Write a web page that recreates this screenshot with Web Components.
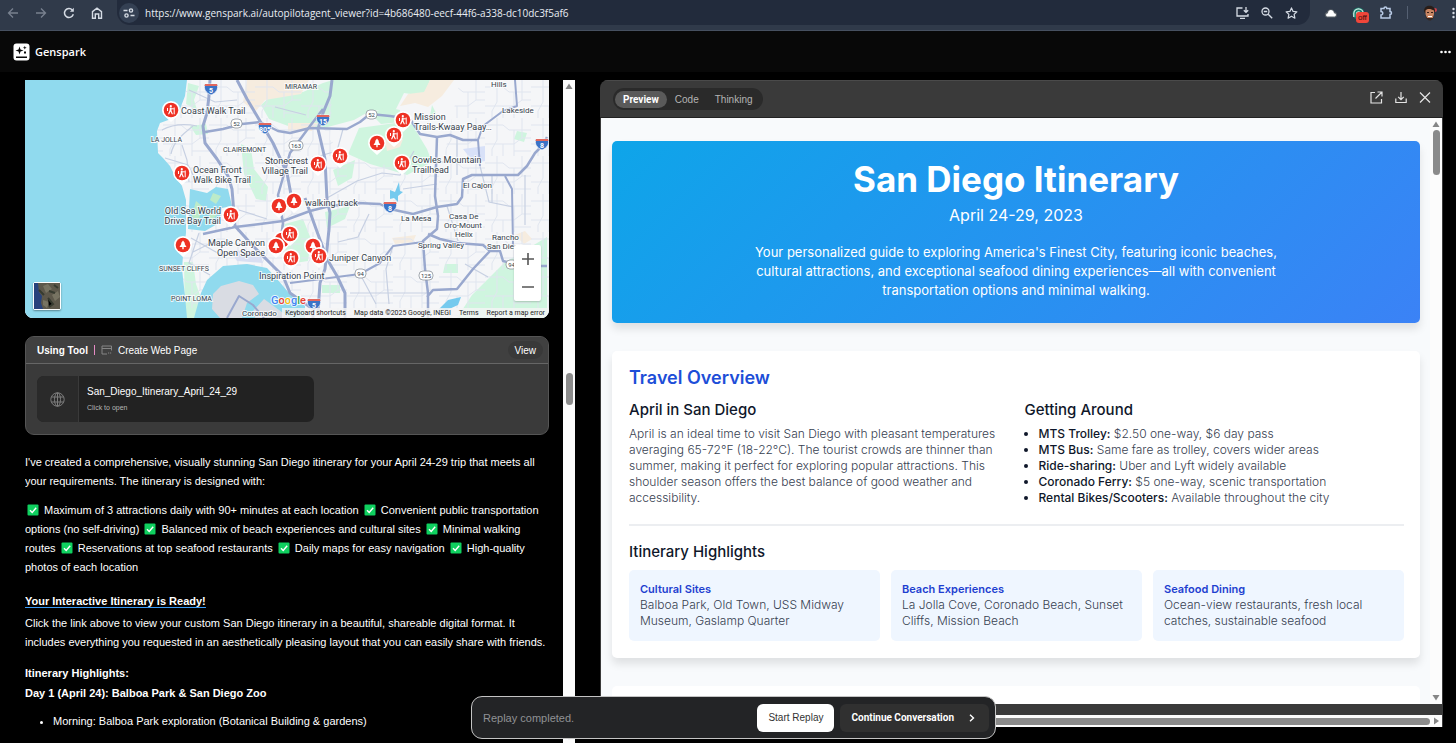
<!DOCTYPE html>
<html lang="en">
<head>
<meta charset="utf-8">
<meta name="viewport" content="width=device-width, initial-scale=1">
<title>Genspark</title>
<style>
    body {
        margin: 0;
        background: #000;
        color: #fff;
        font-family: "Liberation Sans", Arial, sans-serif;
        font-size: 11px;
    }
</style>
</head>
<body>
<app-shell>
    <browser-bar slot="top"></browser-bar>
    <site-header slot="top"></site-header>

    <chat-column slot="chat">
        <trail-map></trail-map>
        <tool-card tool="Create Web Page" file="San_Diego_Itinerary_April_24_29"></tool-card>
        <chat-reply></chat-reply>
    </chat-column>

    <preview-panel slot="preview">
        <hero-banner>
            <span slot="title">San Diego Itinerary</span>
            <span slot="dates">April 24-29, 2023</span>
            Your personalized guide to exploring America's Finest City, featuring iconic beaches, cultural attractions, and exceptional seafood dining experiences—all with convenient transportation options and minimal walking.
        </hero-banner>
        <travel-overview>
            <highlight-tile heading="Cultural Sites">Balboa Park, Old Town, USS Midway Museum, Gaslamp Quarter</highlight-tile>
            <highlight-tile heading="Beach Experiences">La Jolla Cove, Coronado Beach, Sunset Cliffs, Mission Beach</highlight-tile>
            <highlight-tile heading="Seafood Dining">Ocean-view restaurants, fresh local catches, sustainable seafood</highlight-tile>
        </travel-overview>
        <blank-card></blank-card>
    </preview-panel>

    <replay-bar slot="float"></replay-bar>
</app-shell>

<script>
const reset = `
    :host {
        box-sizing: border-box;
    }
    * {
        margin: 0;
        padding: 0;
        box-sizing: border-box;
    }
    button, input {
        font: inherit;
        color: inherit;
        background: none;
        border: 0;
    }
    button {
        display: inline-flex;
        align-items: center;
        justify-content: center;
        cursor: pointer;
    }
    svg {
        display: block;
        flex: none;
    }
`;

class BaseElement extends HTMLElement {

    constructor() {
        super();
        this.shadowDOM = this.attachShadow({mode: "open"});
    }

    connectedCallback() {
        this.shadowDOM.innerHTML = `<style>${reset}</style>${this.template()}`;
    }
}

class AppShell extends BaseElement {
    template() {
        return `
            <style>
                :host {
                    display: flex;
                    flex-direction: column;
                    height: 100vh;
                    overflow: hidden;
                }
                main {
                    flex: 1;
                    min-height: 0;
                    display: grid;
                    grid-template-columns: minmax(0, 550fr) minmax(0, 843fr);
                    grid-template-rows: minmax(0, 1fr);
                    gap: 25px;
                    padding: 8px 13px 0 25px;
                }
            </style>
            <slot name="top"></slot>
            <main>
                <slot name="chat"></slot>
                <slot name="preview"></slot>
            </main>
            <slot name="float"></slot>
        `;
    }
}

class BrowserBar extends BaseElement {
    template() {
        return `
            <style>
                :host {
                    display: flex;
                    align-items: center;
                    flex: none;
                    height: 31px;
                    padding: 0 0 5px 5px;
                    background: #303a4a;
                    border-bottom: 1px solid #465060;
                    color: #d5dbe4;
                }
                nav {
                    display: flex;
                    gap: 12px;
                    margin-right: 12px;
                }
                nav button {
                    width: 16px;
                    height: 16px;
                }
                .off {
                    color: #78818f;
                }
                .address {
                    flex: 1;
                    display: flex;
                    align-items: center;
                    gap: 12px;
                    height: 25px;
                    padding: 0 12px 0 2px;
                    border-radius: 0 0 13px 13px;
                    background: #222b3c;
                }
                .site {
                    width: 20px;
                    height: 20px;
                    border-radius: 50%;
                    background: #344053;
                }
                .address input {
                    flex: 1;
                    min-width: 0;
                    margin-left: -6px;
                    font-family: "Open Sans", sans-serif;
                    font-size: 10px;
                    color: #e9edf3;
                    outline: 0;
                }
                .extensions {
                    display: flex;
                    align-items: center;
                    gap: 14px;
                    padding: 0 1px 0 14px;
                }
                .blocker {
                    position: relative;
                }
                .blocker span {
                    position: absolute;
                    top: 5px;
                    left: 4px;
                    padding: 0 2px;
                    border-radius: 3px;
                    background: #f0463a;
                    color: #3a0d0a;
                    font-size: 8px;
                    line-height: 11px;
                }
                i {
                    width: 1px;
                    height: 13px;
                    background: #556072;
                }
            </style>
            <nav>
                <button class="off" aria-label="Back"><svg width="12" height="12" viewBox="0 0 12 12" fill="none" stroke="currentColor" stroke-width="1.3"><path d="M11 6H2M6 1.5 1.5 6 6 10.500"/></svg></button>
                <button class="off" aria-label="Forward"><svg width="12" height="12" viewBox="0 0 12 12" fill="none" stroke="currentColor" stroke-width="1.3"><path d="M1 6h9M6 1.500 10.500 6 6 10.500"/></svg></button>
                <button aria-label="Reload"><svg width="12" height="12" viewBox="0 0 12 12" fill="none" stroke="currentColor" stroke-width="1.500"><path d="M10.300 7.300A4.500 4.500 0 1 1 9.300 2.900"/><path d="M10.800.8v3.900H6.900z" fill="currentColor" stroke="none"/></svg></button>
                <button aria-label="Home"><svg width="12" height="12" viewBox="0 0 12 12" fill="none" stroke="currentColor" stroke-width="1.400"><path d="M1.500 4.600 6 1.100l4.500 3.500v6.600H7.700V7H4.300v4.200H1.500z"/></svg></button>
            </nav>
            <div class="address">
                <button class="site" aria-label="Site information"><svg width="12" height="10" viewBox="0 0 12 10" fill="none" stroke="currentColor" stroke-width="1.400"><path d="M.5 2.500h4M7.500 7.500h4"/><circle cx="8" cy="2.500" r="1.600"/><circle cx="3.500" cy="7.500" r="1.600"/></svg></button>
                <input aria-label="Address" value="https://www.genspark.ai/autopilotagent_viewer?id=4b686480-eecf-44f6-a338-dc10dc3f5af6">
                <button aria-label="Install app"><svg width="13" height="12" viewBox="0 0 13 12" fill="none" stroke="currentColor" stroke-width="1.300"><path d="M6.500 1H1v8h11V7M4 11.300h5M10 0v5M7.800 3.200 10 5.300l2.200-2.100"/></svg></button>
                <button aria-label="Zoom"><svg width="12" height="12" viewBox="0 0 12 12" fill="none" stroke="currentColor" stroke-width="1.300"><circle cx="4.500" cy="4.500" r="3.500"/><path d="m7.200 7.200 4 4M2.800 4.500h3.400"/></svg></button>
                <button aria-label="Bookmark this page"><svg width="13" height="12" viewBox="0 0 13 12" fill="none" stroke="currentColor" stroke-width="1.200" stroke-linejoin="round"><path d="m6.500.9 1.600 3.500 3.800.4-2.800 2.600.8 3.800-3.400-2-3.400 2 .8-3.800L1.100 4.800l3.800-.4z"/></svg></button>
            </div>
            <div class="extensions">
                <button aria-label="Cloud storage"><svg width="14" height="10" viewBox="0 0 14 10"><path d="M3 9.500a2.800 2.800 0 0 1 0-5.500 4 4 0 0 1 7.600 0 2.800 2.800 0 0 1 .4 5.500z" fill="#5b6268"/><path d="M4 8.500c-3 0-2-3.500 0-3.300 0-4.300 5.600-4.300 6 0 2.500-.2 2.800 3.300 0 3.300z" fill="#fff"/></svg></button>
                <button class="blocker" aria-label="Blocker"><svg width="13" height="12" viewBox="0 0 13 12" fill="none"><circle cx="6.500" cy="6.500" r="6" fill="#177f6c"/><path d="M1.800 10V6.500a4.700 4.700 0 0 1 9.400 0M4.500 10V6.800a2 2 0 0 1 4 0" stroke="#d9f0ea" stroke-width="1.200"/></svg><span>off</span></button>
                <button aria-label="Extensions"><svg width="14" height="13" viewBox="0 0 14 13" fill="none" stroke="#b9cbe6" stroke-width="1.500"><path d="M2 2.500h3a1.400 1.400 0 0 1 2.800 0H11v3a1.500 1.500 0 0 1 0 3V12H2V9a1.600 1.600 0 0 0 0-3.500z"/></svg></button>
                <i></i>
                <button aria-label="Profile"><svg width="16" height="16" viewBox="0 0 16 16"><circle cx="13" cy="5" r="2" fill="#c9414b"/><path d="M2 6c0-7 11-7 11 0l-1 2H3z" fill="#281d19"/><path d="M3.500 5.500C6 3 9 4 12 5.500 12.500 12 10 15 7.800 15 5.500 15 3.200 12 3.500 5.500z" fill="#c88562"/><path d="M5 7.500h2M9 7.500h2" stroke="#382019"/><path d="M6 11.500h4" stroke="#fff"/><path d="M3.500 10c0 3 2 5.500 4.300 5.500S12 13 12 10l-1 3H5z" fill="#342722"/></svg></button>
                <button aria-label="Browser menu"><svg width="3" height="12" viewBox="0 0 3 12" fill="currentColor"><circle cx="1.500" cy="2" r="1.200"/><circle cx="1.500" cy="6" r="1.200"/><circle cx="1.500" cy="10" r="1.200"/></svg></button>
            </div>
        `;
    }
}

class SiteHeader extends BaseElement {
    template() {
        return `
            <style>
                :host {
                    display: flex;
                    align-items: center;
                    justify-content: space-between;
                    flex: none;
                    height: 41px;
                    padding: 0 5px 0 13px;
                    background: #080808;
                }
                a {
                    display: flex;
                    align-items: center;
                    gap: 5px;
                    color: #fff;
                    font: 600 11px/17px "Open Sans", sans-serif;
                    text-decoration: none;
                }
            </style>
            <a href="#"><svg width="17" height="18" viewBox="0 0 17 18"><rect width="16" height="17" x=".5" y=".5" rx="3" fill="#fff"/><path d="M6.500 3.500 7.500 6.500l3 1-3 1-1 3-1-3-3-1 3-1zM11.800 2.800l.5 1.400 1.400.5-1.400.5-.5 1.400-.5-1.400-1.400-.5 1.400-.5zM11 8.500h2v2h-2zM3 13.500h11V15H3z" fill="#0a0a0a"/></svg>Genspark</a>
            <button aria-label="More"><svg width="11" height="4" viewBox="0 0 11 4" fill="#fff"><circle cx="1.500" cy="2" r="1.300"/><circle cx="5.500" cy="2" r="1.300"/><circle cx="9.500" cy="2" r="1.300"/></svg></button>
        `;
    }
}

/* Track with a thumb; "start" and "length" are shares of the track */
class ScrollRail extends BaseElement {
    template() {
        const flat = this.hasAttribute("flat");
        const start = this.getAttribute("start");
        const length = this.getAttribute("length");
        return `
            <style>
                :host {
                    display: flex;
                    flex-direction: ${flat ? "row" : "column"};
                    align-items: center;
                    flex: none;
                    ${flat ? "height" : "width"}: 12px;
                    background: #fcfcfc;
                }
                .track {
                    flex: 1;
                    align-self: stretch;
                    display: flex;
                    flex-direction: ${flat ? "row" : "column"};
                    align-items: center;
                }
                .before {
                    flex: 0 0 ${start}%;
                }
                .thumb {
                    flex: 0 0 ${length}%;
                    ${flat ? "height" : "width"}: 7px;
                    border-radius: 4px;
                    background: #8b8b8b;
                }
                svg {
                    margin: 2px;
                }
            </style>
            ${flat ? "" : `<svg width="8" height="8" viewBox="0 0 8 8"><path d="M4 1.500 7.500 7h-7z" fill="#868686"/></svg>`}
            <div class="track"><div class="before"></div><div class="thumb"></div></div>
            ${flat ? `<svg width="8" height="8" viewBox="0 0 8 8"><path d="M7 4 2 7.500v-7z" fill="#868686"/></svg>`
                   : `<svg width="8" height="8" viewBox="0 0 8 8"><path d="M4 6.500.5 1h7z" fill="#868686"/></svg>`}
        `;
    }
}

class ChatColumn extends BaseElement {
    template() {
        return `
            <style>
                :host {
                    display: flex;
                    gap: 14px;
                    min-width: 0;
                    min-height: 0;
                }
                .content {
                    flex: 1;
                    min-width: 0;
                    display: flex;
                    flex-direction: column;
                    gap: 18px;
                    overflow: hidden;
                }
                scroll-rail {
                    height: 100%;
                }
            </style>
            <div class="content"><slot></slot></div>
            <scroll-rail start="44" length="5"></scroll-rail>
        `;
    }
}

const hikePins = [[146, 30], [157, 93], [206, 135], [378, 40], [369, 55], [377, 83], [293, 84], [315, 76], [265, 154], [266, 178]];
const treePins = [[352, 63], [254, 126], [269, 121], [158, 165], [251, 166], [288, 166]];

class TrailMap extends BaseElement {

    pins(id, list) {
        return list.map(([x, y]) => `<use href="#${id}" x="${x}" y="${y}"/>`).join("");
    }

    template() {
        return `
            <style>
                :host {
                    display: block;
                    position: relative;
                    flex: none;
                    height: 238px;
                    border-radius: 0 0 8px 8px;
                    background: #90daee;
                    overflow: hidden;
                    font-family: Roboto, sans-serif;
                }
                .canvas {
                    width: 100%;
                    height: 100%;
                }
                text {
                    fill: #37424c;
                    stroke: #fff;
                    stroke-width: 2px;
                    stroke-opacity: .8;
                    paint-order: stroke;
                    font-size: 9px;
                }
                .area text {
                    font-size: 7px;
                }
                .city text {
                    font-size: 8px;
                }
                .route text {
                    font-size: 6px;
                    text-anchor: middle;
                    stroke: none;
                }
                .shield text {
                    fill: #fff;
                    font-size: 7px;
                    font-weight: 700;
                    text-anchor: middle;
                    stroke: none;
                }
                .logo {
                    font-size: 11px;
                    font-weight: 500;
                }
                .layers {
                    position: absolute;
                    left: 8px;
                    bottom: 8px;
                    border: 1px solid #fff;
                    border-radius: 2px;
                    box-shadow: 0 1px 2px rgba(0, 0, 0, .4);
                }
                .zoom {
                    position: absolute;
                    right: 8px;
                    bottom: 17px;
                    display: flex;
                    flex-direction: column;
                    background: #fff;
                    box-shadow: 0 1px 2px rgba(0, 0, 0, .2);
                    border-radius: 2px;
                }
                .zoom button {
                    width: 27px;
                    height: 28px;
                }
                footer {
                    position: absolute;
                    right: 0;
                    bottom: 0;
                    display: flex;
                    gap: 8px;
                    padding: 0 4px 0 3px;
                    background: rgba(245, 245, 245, .8);
                    color: #222;
                    font-size: 7px;
                    line-height: 10px;
                }
                footer a {
                    color: inherit;
                    text-decoration: none;
                }
            </style>
            <svg class="canvas" viewBox="0 0 524 238" preserveAspectRatio="xMidYMid slice" role="img" aria-label="Map of San Diego walking trails">
                <defs>
                    <pattern id="streets" width="46" height="38" patternUnits="userSpaceOnUse">
                        <path d="M0 7h18l6 5h22M12 0v22l-5 9v7M29 12v26M0 26h29l8-6h9M37 0v20M18 26v12M29 33h17" fill="none" stroke="#e0e5ef"/>
                    </pattern>
                    <g id="base">
                        <path d="M0 12 5.500 7A9 9 0 1 0-5.500 7z" fill="#fff"/>
                        <circle r="7.300" fill="#ee3124"/>
                    </g>
                    <g id="hike">
                        <use href="#base"/>
                        <circle cx="-.2" cy="-3.800" r="1.100" fill="#fff"/>
                        <path d="M-1.200-2.500.9-2.200.5.800 2 4.200H.8L-.5 1.500-1.800 4.200H-3l1.600-4z" fill="#fff"/>
                        <path d="M-3.500-2v3M.8-1.200h2M3.200-2.500V4.300" fill="none" stroke="#fff"/>
                    </g>
                    <g id="tree">
                        <use href="#base"/>
                        <path d="M0-4.500 2.200-1.500H1.400L3.500 2H.7v2.300H-.7V2h-2.800l2.100-3.500h-.8z" fill="#fff"/>
                    </g>
                    <g id="interstate">
                        <path d="M-6-5H6c2 5-1 9-6 11C-5 4-8 0-6-5z" fill="#3b73c6" stroke="#fff" stroke-width=".7"/>
                        <path d="M-6-5H6l.5 2h-13z" fill="#e2685f"/>
                    </g>
                </defs>
                <rect width="524" height="238" fill="#f5f6f8"/>
                <g fill="#cff5df">
                    <path d="M308 0h97l-6 16-20-3-8 16-26 2-16 9-30 8-33-1-22-8-8-14 12-11 30-2 20-9z"/>
                    <path d="M334 48 385 41l17 28 5 13-25 13-37-11-22-10z"/>
                    <path d="m308 90 22-10-3 18-14 8zM216 64l10 5 3 20 14 18-2 14-10-2-12-25zM163 3l11 3-5 14 3 10-11-6zM165 46l16-2 2 10-12 1z"/>
                    <path d="m432 238 15-23 18-18 14-14 43-26v81zM256 145l22-6 8 20-3 22-20 3zM420 184h13v9h-15zM346 34l15-7 14 3 1 12-20 2zM297 205h18v8h-18z"/>
                    <path d="M159 182h9l3 22 5 14v20h-16zM300 132l25-6-5 13-18 9zM407 25l4 8-6 3zM492 51l10 2-3 9-10-3z"/>
                </g>
                <g fill="#f6ecdf">
                    <path d="M222 0h62l-8 14-36 6-10 12-12-10zM405 0h24l-12 16-14 11-13-4-15 3 8-12 16-2zM263 43h30l-6 8h-24zM360 60l18-1-3 8-13 4zM367 158l24-3-3 7-18 2zM490 155l10-4 7 8-8 5z"/>
                </g>
                <path d="M126 0h182l-3 60 30 20 80 16 20-96h89v238H126z" fill="url(#streets)"/>
                <path d="M0 0h162l-2 16-5 13-9 10-11 4-3 8 1 22 5 5 7 8 5 10 7 10 4 14v33l-3 23-1 13 3 27 2 22H0z" fill="#90daee"/>
                <path d="m165 109 17 4 9-6 12 2 4 17-10 2-3 15-14 8-17-2z" fill="#90daee"/>
                <path d="m171 121 6 5-4 18-6-8zM188 113l8 3-5 8-6-4zM184 132l8 3-7 7z" fill="#bcebc9"/>
                <path d="m169 238 7-25 6-13 16-14 24-2 20 4 10 11 12 14 16 13v12z" fill="#90daee"/>
                <path d="m188 214 8-8 18-5 14 4 6 9-12 9-5 15h-22l-8-9zM228 231l11-12 26 19h-35z" fill="#d9dce3"/>
                <path d="m205 170 30 2 3 11-26-2z" fill="#d9dff2"/>
                <path d="m438 69 22-3v15l-11 2z" fill="#d8e1f8"/>
                <path d="m365 110 5 2 4-10 1 9 3 1-5 4v6l-4-4-4 1zM414 229l9-9 13-3-3 8-11 5z" fill="#75caee"/>
                <g fill="none" stroke="#c7d0e2" stroke-width="1.200">
                    <path d="M137 50c9-5 21-7 35-4M146 74c2-12 12-20 22-28M157 65l5 15 2 22M140 78l23 7 9 18M164 10l26 12 22-2M167 29l30 5M214 130l28 9M166 158l32 18M174 153l-10 30 21 12M168 172l22-11M250 27l31 8M318 49l-6 22-21 6"/>
                    <path d="m302 118 30-17 25-8 18 2 14-24M344 134l-11 23-20 5M368 166l-7 23 3 35M432 58v37M467 95v28M500 95v50M410 82h42M455 86l9 36 24 5M412 104l-34 5M335 194l16 30M440 184l23 13M422 126l11 35M325 213h78"/>
                </g>
                <g fill="none" stroke="#99a8ce" stroke-width="2.500" stroke-linejoin="round">
                    <path d="m185 0-1 16-2 17-4 13 2 17 12 16 11 17 4 13 3 37 18 20 17 17 13 13 7 17 23 16v10" stroke-width="3"/>
                    <path d="m212 0 10 19 13 22 13 22 14 30 5 27M280 118l10 28 12 33 10 17 8 17v25" stroke-width="3"/>
                    <path d="m180 52 18-3 19-5 18-2 18 9 12 2 20-5 37 1 13-7 10-8 20 2 20 3 10 15 17 3 13-2 13 5h15"/>
                    <path d="m307 0-2 16-7 17-5 16 7 30 2 41 3 13-1 16-2 20-2 20-5 14-2 28" stroke-width="3"/>
                    <path d="m298 29-13 17-20 27-12 42 5 28-4 30M178 154l32-7 25-3 23-3 27-10 20-5 27-3 23 1 10 5 23 5 24-7 20-3 5-7 1-18 9-4h46l9-9 8-13 7-7 5-9"/>
                    <path d="m412 57-2 59 3 20-1 13-14 12 2 28 3 24v25M403 154l12 5 17 4 26 2 7 6h10l3 10 20 5h24M465 171l-17 18-16 20-24 1-6 7"/>
                    <path d="m398 162-30 4-13 17-20 11-23 3-47 6M455 86l-2-26 5-14 20-15 14-5-2-26M480 96l7 13 1 57M202 238l12-22 14 9 11 13" stroke-width="2"/>
                </g>
                <g class="shield">
                    <use href="#interstate" x="186" y="9"/><text x="186" y="13">5</text>
                    <use href="#interstate" x="240" y="48"/><text x="240" y="52">805</text>
                    <use href="#interstate" x="298" y="40"/><text x="298" y="44">15</text>
                    <use href="#interstate" x="365" y="127"/><text x="365" y="131">8</text>
                    <use href="#interstate" x="517" y="64"/><text x="517" y="68">8</text>
                    <use href="#interstate" x="289" y="224"/><text x="289" y="228">5</text>
                </g>
                <g class="route">
                    <g fill="#fff" stroke="#8d949c" stroke-width=".8">
                        <rect x="206" y="39" width="11" height="9" rx="4"/>
                        <rect x="341" y="30" width="11" height="9" rx="4"/>
                        <rect x="264" y="61" width="14" height="9" rx="4"/>
                        <rect x="330" y="189" width="11" height="9" rx="4"/>
                        <rect x="394" y="191" width="14" height="9" rx="4"/>
                        <rect x="481" y="180" width="11" height="9" rx="4"/>
                    </g>
                    <text x="211.500" y="46">52</text><text x="346.500" y="37">52</text><text x="271" y="68">163</text>
                    <text x="335.500" y="196">94</text><text x="401" y="198">125</text><text x="486.500" y="187">94</text>
                </g>
                <g class="area">
                    <text x="260" y="9">MIRAMAR</text>
                    <text x="126" y="62">LA JOLLA</text>
                    <text x="198" y="72">CLAIREMONT</text>
                    <text x="134" y="191">SUNSET CLIFFS</text>
                    <text x="146" y="221">POINT LOMA</text>
                </g>
                <g class="city">
                    <text x="466" y="7">Hills</text>
                    <text x="477" y="33">Lakeside</text>
                    <text x="438" y="108">El Cajon</text>
                    <text x="376" y="141">La Mesa</text>
                    <text x="424" y="139">Casa De</text>
                    <text x="419" y="148">Oro-Mount</text>
                    <text x="430" y="157">Helix</text>
                    <text x="393" y="168">Spring Valley</text>
                    <text x="467" y="160">Rancho</text>
                    <text x="462" y="169">San Diego</text>
                    <text x="217" y="236">Coronado</text>
                </g>
                <use href="#base" x="257" y="160"/>
                ${this.pins("hike", hikePins)}
                ${this.pins("tree", treePins)}
                <use href="#hike" x="294" y="176"/>
                <text x="156" y="34">Coast Walk Trail</text>
                <text x="168" y="93">Ocean Front</text>
                <text x="168" y="103">Walk Bike Trail</text>
                <text x="389" y="40">Mission</text>
                <text x="389" y="50">Trails-Kwaay Paay…</text>
                <text x="387" y="83">Cowles Mountain</text>
                <text x="387" y="93">Trailhead</text>
                <g text-anchor="end">
                    <text x="283" y="84">Stonecrest</text>
                    <text x="283" y="94">Village Trail</text>
                    <text x="196" y="134">Old Sea World</text>
                    <text x="196" y="144">Drive Bay Trail</text>
                    <text x="240" y="166">Maple Canyon</text>
                    <text x="240" y="176">Open Space</text>
                </g>
                <text x="280" y="126">walking track</text>
                <text x="304" y="181">Juniper Canyon</text>
                <text x="234" y="199">Inspiration Point</text>
                <text class="logo" x="246" y="224"><tspan fill="#4285f4">G</tspan><tspan fill="#ea4335">o</tspan><tspan fill="#fbbc05">o</tspan><tspan fill="#4285f4">g</tspan><tspan fill="#34a853">l</tspan><tspan fill="#ea4335">e</tspan></text>
            </svg>
            <button class="layers" aria-label="Satellite view"><svg width="26" height="26" viewBox="0 0 26 26"><path d="M0 0h26v26H0z" fill="#5d584b"/><path d="M0 0h4l1 9 3 4-1 7 2 6H0z" fill="#27427c"/><path d="m9 3 5-2 4 5-6 4zM18 12l6-4 2 6-5 4zM9 17l6 2-2 6-4-3z" fill="#777362"/><path d="m5 7 5 5M15 8l6 2M14 15l5 6-4 3M20 2l4 3" stroke="#373b30" stroke-width="2"/></svg></button>
            <div class="zoom">
                <button aria-label="Zoom in"><svg width="12" height="12" viewBox="0 0 12 12"><path d="M6 0v12M0 6h12" stroke="#555" stroke-width="1.600"/></svg></button>
                <button aria-label="Zoom out"><svg width="12" height="12" viewBox="0 0 12 12"><path d="M0 6h12" stroke="#555" stroke-width="1.600"/></svg></button>
            </div>
            <footer>
                <button>Keyboard shortcuts</button>
                <span>Map data ©2025 Google, INEGI</span>
                <a href="#">Terms</a>
                <a href="#">Report a map error</a>
            </footer>
        `;
    }
}

class ToolCard extends BaseElement {
    template() {
        return `
            <style>
                :host {
                    display: block;
                    flex: none;
                    border: 1px solid #555;
                    border-radius: 9px;
                    background: #3a3a3a;
                    overflow: hidden;
                }
                header {
                    display: flex;
                    align-items: center;
                    gap: 6px;
                    height: 27px;
                    padding: 0 5px 0 11px;
                    border-bottom: 1px solid #666;
                    background: #404040;
                    font-size: 10px;
                }
                i {
                    width: 1px;
                    height: 10px;
                    background: #e68bc4;
                }
                header button {
                    margin-left: auto;
                    padding: 0 7px;
                    height: 18px;
                    border-radius: 9px;
                    background: #393939;
                }
                .file {
                    display: flex;
                    width: 277px;
                    max-width: 100%;
                    height: 46px;
                    margin: 12px 11px;
                    border-radius: 7px;
                    background: #222;
                    overflow: hidden;
                    text-align: left;
                    justify-content: flex-start;
                }
                .icon {
                    display: grid;
                    place-items: center;
                    width: 42px;
                    height: 46px;
                    border-right: 1px solid #3a3a3a;
                    background: #2a2a2a;
                }
                .name {
                    display: grid;
                    gap: 4px;
                    padding-left: 8px;
                    font-size: 10px;
                    line-height: 14px;
                }
                small {
                    color: #b5b5b5;
                    font-size: 7px;
                    line-height: 10px;
                }
            </style>
            <header>
                <b>Using Tool</b>
                <i></i>
                <svg width="11" height="10" viewBox="0 0 11 10" fill="none" stroke="#858585"><path d="M6 9H1V1h9.500v4.500M1 3.500h9.500M7 8h1.200M9 8h1.200"/></svg>
                <span>${this.getAttribute("tool")}</span>
                <button>View</button>
            </header>
            <button class="file">
                <span class="icon"><svg width="15" height="15" viewBox="0 0 15 15" fill="none" stroke="#7d7d7d"><circle cx="7.500" cy="7.500" r="6.700"/><ellipse cx="7.500" cy="7.500" rx="3" ry="6.700"/><path d="M7.500.8v13.400M1.500 5h12M1.500 10h12"/></svg></span>
                <span class="name">${this.getAttribute("file")}<small>Click to open</small></span>
            </button>
        `;
    }
}

const tick = `<svg class="tick" width="12" height="12" viewBox="0 0 12 12" role="img" aria-label="done"><rect x=".5" y=".5" width="11" height="11" rx="1" fill="#0fd05f"/><path d="m3 6.200 2.200 2.300L9.200 3.700" fill="none" stroke="#fff" stroke-width="1.400"/></svg>`;

class ChatReply extends BaseElement {
    template() {
        return `
            <style>
                :host {
                    display: block;
                    flex: none;
                    font-size: 11px;
                    line-height: 19px;
                }
                .tick {
                    display: inline-block;
                    vertical-align: -2px;
                    margin: 0 2px;
                }
                .checks {
                    margin-top: 10px;
                }
                h3 {
                    margin-top: 15px;
                    font-size: 11px;
                }
                h3 a {
                    color: inherit;
                    border-bottom: 1px solid #3b9bf6;
                    text-decoration: none;
                }
                h3 + p {
                    margin-top: 3px;
                }
                h4 {
                    margin-top: 12px;
                    font-size: 11px;
                }
                h4 + h4 {
                    margin-top: 1px;
                }
                ul {
                    margin-top: 9px;
                    padding-left: 28px;
                }
            </style>
            <p>I've created a comprehensive, visually stunning San Diego itinerary for your April 24-29 trip that meets all your requirements. The itinerary is designed with:</p>
            <p class="checks">${tick} Maximum of 3 attractions daily with 90+ minutes at each location ${tick} Convenient public transportation options (no self-driving) ${tick} Balanced mix of beach experiences and cultural sites ${tick} Minimal walking routes ${tick} Reservations at top seafood restaurants ${tick} Daily maps for easy navigation ${tick} High-quality photos of each location</p>
            <h3><a href="#">Your Interactive Itinerary is Ready!</a></h3>
            <p>Click the link above to view your custom San Diego itinerary in a beautiful, shareable digital format. It includes everything you requested in an aesthetically pleasing layout that you can easily share with friends.</p>
            <h4>Itinerary Highlights:</h4>
            <h4>Day 1 (April 24): Balboa Park &amp; San Diego Zoo</h4>
            <ul>
                <li>Morning: Balboa Park exploration (Botanical Building &amp; gardens)</li>
            </ul>
        `;
    }
}

class PreviewPanel extends BaseElement {
    template() {
        return `
            <style>
                :host {
                    display: flex;
                    flex-direction: column;
                    min-width: 0;
                    min-height: 0;
                    margin-bottom: 16px;
                    border-radius: 8px 8px 0 0;
                    background: #3a3a3a;
                    overflow: hidden;
                }
                header {
                    display: flex;
                    align-items: center;
                    justify-content: space-between;
                    flex: none;
                    height: 38px;
                    padding: 0 12px 0 13px;
                    border-top: 1px solid #4a4a4a;
                    border-bottom: 1px solid #222;
                }
                .tabs {
                    display: flex;
                    align-items: center;
                    height: 22px;
                    padding: 0 2px;
                    border-radius: 11px;
                    background: #2a2a2a;
                    color: #b4b4b4;
                    font-size: 10px;
                }
                .tabs button {
                    height: 17px;
                    padding: 0 8px;
                    border-radius: 9px;
                }
                .tabs .active {
                    background: #5a5a5a;
                    color: #fff;
                    font-family: Roboto, sans-serif;
                    font-weight: 700;
                }
                .actions {
                    display: flex;
                    gap: 12px;
                    padding-bottom: 3px;
                }
                .view {
                    flex: 1;
                    min-height: 0;
                    display: flex;
                    margin: 0 1px;
                }
                .page {
                    flex: 1;
                    min-width: 0;
                    display: flex;
                    flex-direction: column;
                    gap: 28px;
                    padding: 23px 10px 0 11px;
                    background: #f8fafc;
                    overflow: hidden;
                    color: #0f172a;
                    font-family: Inter, sans-serif;
                }
                [flat] {
                    margin: 11px 1px 0;
                }
            </style>
            <header>
                <div class="tabs">
                    <button class="active">Preview</button>
                    <button>Code</button>
                    <button>Thinking</button>
                </div>
                <div class="actions">
                    <button aria-label="Open in new tab"><svg width="13" height="13" viewBox="0 0 13 13" fill="none" stroke="#e4e4e4" stroke-width="1.200"><path d="M5 1.500H1v10.500h10.500V8M7.500 1H12v4.500M12 1 5.500 7.500"/></svg></button>
                    <button aria-label="Download"><svg width="12" height="13" viewBox="0 0 12 13" fill="none" stroke="#e4e4e4" stroke-width="1.200"><path d="M.8 7.500v4h10.400v-4M6 1v7.500M3.200 5.800 6 8.600l2.800-2.800"/></svg></button>
                    <button aria-label="Close"><svg width="12" height="13" viewBox="0 0 12 13" fill="none" stroke="#e4e4e4" stroke-width="1.200"><path d="m1 1.500 10 10M11 1.500l-10 10"/></svg></button>
                </div>
            </header>
            <div class="view">
                <div class="page"><slot></slot></div>
                <scroll-rail start="0" length="8"></scroll-rail>
            </div>
            <scroll-rail flat start="0" length="100"></scroll-rail>
        `;
    }
}

class HeroBanner extends BaseElement {
    template() {
        return `
            <style>
                :host {
                    display: block;
                    flex: none;
                    padding: 17px 17px 23px;
                    border-radius: 5px;
                    background: linear-gradient(135deg, #0ea5e9, #3b82f6);
                    box-shadow: 0 6px 8px rgba(0, 0, 0, .1);
                    color: #fff;
                    text-align: center;
                }
                h1 {
                    font-size: 35px;
                    font-weight: 700;
                    line-height: 42px;
                }
                .dates {
                    margin: 2px 0 15px;
                    font-size: 16px;
                    line-height: 26px;
                }
                .intro {
                    max-width: 540px;
                    margin: 0 auto;
                    font-size: 13px;
                    line-height: 19px;
                }
            </style>
            <h1><slot name="title"></slot></h1>
            <p class="dates"><slot name="dates"></slot></p>
            <p class="intro"><slot></slot></p>
        `;
    }
}

class TravelOverview extends BaseElement {
    template() {
        return `
            <style>
                :host {
                    display: block;
                    flex: none;
                    padding: 16px 16px 17px 17px;
                    border-radius: 5px;
                    background: #fff;
                    box-shadow: 0 6px 8px rgba(0, 0, 0, .1);
                    font-size: 12px;
                    font-weight: 300;
                    line-height: 16px;
                }
                h2 {
                    color: #1d4ed8;
                    font-size: 18px;
                    font-weight: 600;
                    line-height: 22px;
                }
                h3 {
                    font-size: 15px;
                    font-weight: 500;
                    line-height: 20px;
                }
                .columns {
                    display: grid;
                    grid-template-columns: 1fr 1fr;
                    gap: 16px;
                    padding: 11px 0 18px;
                    border-bottom: 2px solid #eceef1;
                }
                p, ul {
                    margin-top: 6px;
                    color: #374151;
                }
                ul {
                    padding-left: 14px;
                }
                li::marker, b {
                    color: #0f172a;
                }
                b {
                    font-weight: 500;
                }
                .columns + h3 {
                    margin: 16px 0 8px;
                }
                .tiles {
                    display: grid;
                    grid-template-columns: repeat(3, 1fr);
                    gap: 11px;
                }
            </style>
            <h2>Travel Overview</h2>
            <div class="columns">
                <section>
                    <h3>April in San Diego</h3>
                    <p>April is an ideal time to visit San Diego with pleasant temperatures averaging 65-72°F (18-22°C). The tourist crowds are thinner than summer, making it perfect for exploring popular attractions. This shoulder season offers the best balance of good weather and accessibility.</p>
                </section>
                <section>
                    <h3>Getting Around</h3>
                    <ul>
                        <li><b>MTS Trolley:</b> $2.50 one-way, $6 day pass</li>
                        <li><b>MTS Bus:</b> Same fare as trolley, covers wider areas</li>
                        <li><b>Ride-sharing:</b> Uber and Lyft widely available</li>
                        <li><b>Coronado Ferry:</b> $5 one-way, scenic transportation</li>
                        <li><b>Rental Bikes/Scooters:</b> Available throughout the city</li>
                    </ul>
                </section>
            </div>
            <h3>Itinerary Highlights</h3>
            <div class="tiles"><slot></slot></div>
        `;
    }
}

class HighlightTile extends BaseElement {
    template() {
        return `
            <style>
                :host {
                    display: block;
                    padding: 11px 11px 12px;
                    border-radius: 5px;
                    background: #eff6ff;
                    color: #374151;
                }
                h4 {
                    color: #1e3fd0;
                    font-size: 11px;
                    font-weight: 600;
                }
            </style>
            <h4>${this.getAttribute("heading")}</h4>
            <p><slot></slot></p>
        `;
    }
}

class BlankCard extends BaseElement {
    template() {
        return `
            <style>
                :host {
                    display: block;
                    flex: 1;
                    min-height: 18px;
                    border-radius: 5px 5px 0 0;
                    background: #fff;
                }
            </style>
        `;
    }
}

class ReplayBar extends BaseElement {
    template() {
        return `
            <style>
                :host {
                    position: fixed;
                    inset: auto 0 4px 11px;
                    display: flex;
                    align-items: center;
                    gap: 6px;
                    width: 525px;
                    max-width: 100%;
                    height: 43px;
                    margin: 0 auto;
                    padding: 0 6px 0 11px;
                    border: 1px solid #c4c4c4;
                    border-radius: 11px;
                    background: #232426;
                    font-size: 10px;
                }
                p {
                    flex: 1;
                    color: #909295;
                    font-size: 11px;
                }
                button {
                    height: 28px;
                    border-radius: 6px;
                }
                .start {
                    padding: 0 11px;
                    background: #fff;
                    color: #333;
                }
                .continue {
                    gap: 15px;
                    padding: 0 14px 0 11px;
                    background: #303030;
                    font-family: Roboto, sans-serif;
                    font-weight: 700;
                }
            </style>
            <p>Replay completed.</p>
            <button class="start">Start Replay</button>
            <button class="continue">Continue Conversation <svg width="6" height="8" viewBox="0 0 6 8" fill="none" stroke="#fff" stroke-width="1.400"><path d="m1 .7 3.500 3.300L1 7.300"/></svg></button>
        `;
    }
}

customElements.define("scroll-rail", ScrollRail);
customElements.define("app-shell", AppShell);
customElements.define("browser-bar", BrowserBar);
customElements.define("site-header", SiteHeader);
customElements.define("chat-column", ChatColumn);
customElements.define("trail-map", TrailMap);
customElements.define("tool-card", ToolCard);
customElements.define("chat-reply", ChatReply);
customElements.define("preview-panel", PreviewPanel);
customElements.define("hero-banner", HeroBanner);
customElements.define("travel-overview", TravelOverview);
customElements.define("highlight-tile", HighlightTile);
customElements.define("blank-card", BlankCard);
customElements.define("replay-bar", ReplayBar);
</script>
</body>
</html>
